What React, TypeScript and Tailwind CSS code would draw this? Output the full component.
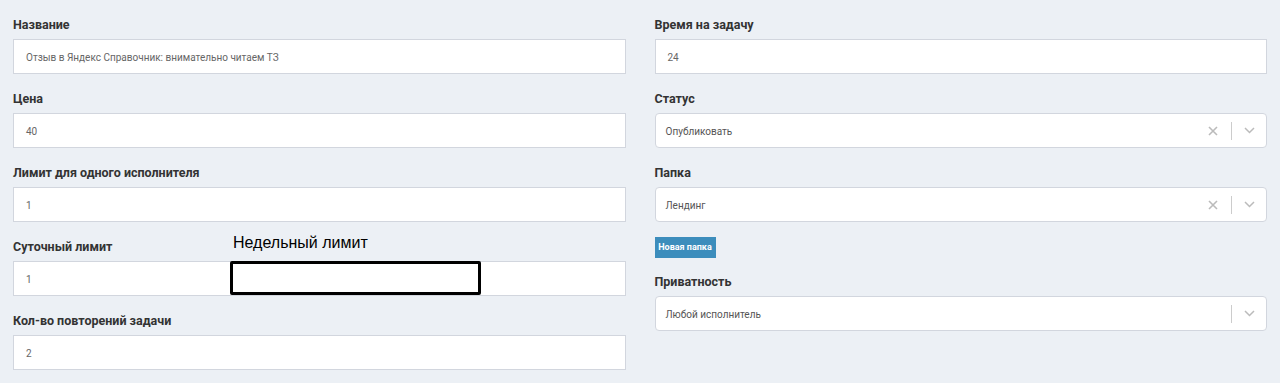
import type { ReactNode } from "react";

const font = { fontFamily: "Roboto, 'Noto Sans', sans-serif" };

export default function App() {
  return (
    <div
      className="min-h-[383px] w-full bg-[#ecf0f5] px-[13px] pt-[18px]"
      style={font}
    >
      <div className="grid grid-cols-2 gap-x-[29px]">
        <div className="flex flex-col gap-[18px]">
          <Field label="Название">
            <TextInput value="Отзыв в Яндекс Справочник: внимательно читаем ТЗ" />
          </Field>
          <Field label="Цена">
            <TextInput value="40" />
          </Field>
          <Field label="Лимит для одного исполнителя">
            <TextInput value="1" />
          </Field>
          <div className="relative">
            <Field label="Суточный лимит">
              <TextInput value="1" />
            </Field>
            {/* pasted annotation */}
            <div
              className="absolute left-[220px] top-[-7px] text-[16px] leading-[20px] text-black"
              style={{ fontFamily: "'Liberation Sans', Arial, sans-serif" }}
            >
              Недельный лимит
            </div>
            <div className="absolute left-[217px] top-[21px] h-[34px] w-[251px] rounded-[2px] border-[3px] border-black bg-white" />
          </div>
          <Field label="Кол-во повторений задачи">
            <TextInput value="2" />
          </Field>
        </div>

        <div className="flex flex-col">
          <Field label="Время на задачу">
            <TextInput value="24" />
          </Field>
          <div className="mt-[18px]">
            <Field label="Статус">
              <Select value="Опубликовать" clearable />
            </Field>
          </div>
          <div className="mt-[18px]">
            <Field label="Папка">
              <Select value="Лендинг" clearable />
            </Field>
          </div>
          <button className="mt-[15px] flex h-[21px] w-[61px] items-center justify-center bg-[#3c8dbc] text-[9px] font-bold text-white">
            Новая папка
          </button>
          <div className="mt-[17px]">
            <Field label="Приватность">
              <Select value="Любой исполнитель" />
            </Field>
          </div>
        </div>
      </div>
    </div>
  );
}

function Field({ label, children }: { label: string; children: ReactNode }) {
  return (
    <div>
      <div className="mb-[7px] text-[12.5px] font-bold leading-[14px] text-[#333]">
        {label}
      </div>
      {children}
    </div>
  );
}

function TextInput({ value }: { value: string }) {
  return (
    <div className="flex h-[35px] items-center border border-[#d2d6de] bg-white pl-[12px] pt-[2px] text-[10px] text-[#666]">
      {value}
    </div>
  );
}

function Select({ value, clearable }: { value: string; clearable?: boolean }) {
  return (
    <div className="flex h-[35px] items-center rounded-[4px] border border-[#d2d6de] bg-white pl-[10px] pr-[11px] text-[10px] text-[#555]">
      <span className="flex-1 pt-[2px]">{value}</span>
      {clearable && (
        <svg width="10" height="10" viewBox="0 0 10 10" className="mr-[13px]">
          <path d="M1 1 L9 9 M9 1 L1 9" stroke="#bbb" strokeWidth="1.6" />
        </svg>
      )}
      <span className="h-[18px] w-px bg-[#ccc]" />
      <svg width="11" height="7" viewBox="0 0 11 7" className="ml-[12px]">
        <path d="M1 1 L5.5 5.5 L10 1" stroke="#bbb" strokeWidth="1.5" fill="none" />
      </svg>
    </div>
  );
}
